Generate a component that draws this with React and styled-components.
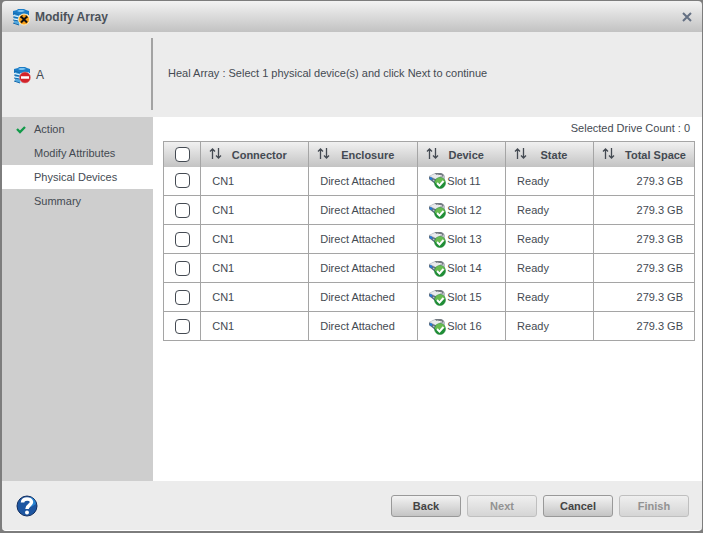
import React, { useState } from "react"
import styled, { createGlobalStyle } from "styled-components"

const GlobalStyle = createGlobalStyle`
	* {
		box-sizing: border-box;
	}

	body {
		margin: 0;
		background: #7d7d7d;
		color: #444a52;
		font-family: "Liberation Sans", Arial, sans-serif;
		font-size: 11px;
		line-height: 14px;
	}
`

const DialogElement = styled.div`
	min-height: 100vh;
	padding: 1px 1px 2px 2px;
	display: flex;
	flex-direction: column;
`

const TitleBarElement = styled.header`
	height: 31px;
	padding: 0 7px 0 10px;
	display: flex;
	align-items: center;
	border-radius: 4px 4px 0 0;
	background: linear-gradient(#f3f3f3, #c2c2c2);
`

const TitleElement = styled.h1`
	flex: 1;
	margin: 0 0 0 5px;
	color: #4b5159;
	font-size: 12px;
	font-weight: bold;
`

const CloseElement = styled.button`
	width: 16px;
	height: 16px;
	padding: 0;
	border: 0;
	background: none;
	display: flex;
	align-items: center;
	justify-content: center;
`

const InfoElement = styled.section`
	height: 85px;
	display: flex;
	background: #ececec;
`

const ArrayNameElement = styled.div`
	width: 151px;
	margin: 6px 0 7px;
	padding: 1px 0 0 11px;
	display: flex;
	align-items: center;
	gap: 5px;
	border-right: 2px solid #a3a3a3;
	font-size: 12px;
`

const MessageElement = styled.p`
	margin: 34px 0 0 15px;
`

const BodyElement = styled.div`
	flex: 1;
	display: flex;
	background: #fff;
`

const StepsElement = styled.nav`
	width: 151px;
	flex: none;
	background: #cecece;
`

const StepElement = styled.a`
	height: 24px;
	display: grid;
	grid-template-columns: 32px 1fr;
	align-items: center;
	color: inherit;
	text-decoration: none;
	background: ${(props) => (props.$active ? "#fff" : "none")};

	> svg {
		margin-left: 14px;
	}

	> span {
		grid-column: 2;
	}
`

const ContentElement = styled.main`
	flex: 1;
	padding: 4px 7px 0 10px;
`

const CountElement = styled.p`
	margin: 0 5px 6px 0;
	text-align: right;
`

const TableElement = styled.table`
	width: 100%;
	table-layout: fixed;
	border-collapse: collapse;
	border: 1px solid #a5a5a5;
`

const HeadRowElement = styled.tr`
	height: 25px;
	background: linear-gradient(#f1f1f1, #c3c3c3);
`

const RowElement = styled.tr`
	height: 29px;
	border-bottom: 1px solid #a5a5a5;
`

const HeadCellElement = styled.th`
	width: ${(props) => props.$width};
	padding: 0 8px;
	border-right: 1px solid #a5a5a5;
	font-size: 11px;
	font-weight: bold;
`

const SortElement = styled.button`
	width: 100%;
	padding: 0;
	border: 0;
	background: none;
	color: inherit;
	font: inherit;
	display: flex;
	align-items: center;

	> span {
		flex: 1;
		padding: ${(props) => (props.$align ? "2px 0 0" : "2px 4px 0 0")};
		text-align: ${(props) => props.$align || "center"};
	}
`

const CellElement = styled.td`
	padding: 0 11px;
	border-right: 1px solid #a5a5a5;
	text-align: ${(props) => props.$align || "left"};
`

const DeviceElement = styled.div`
	display: flex;
	align-items: center;
	gap: 1px;
`

const CheckboxElement = styled.input.attrs({ type: "checkbox" })`
	appearance: none;
	display: block;
	width: 15px;
	height: 15px;
	margin: 0 auto;
	border: 1px solid #444a52;
	border-radius: 4px;
	background: #fff;

	&:checked {
		box-shadow: inset 0 0 0 3px #fff;
		background: #444a52;
	}
`

const FooterElement = styled.footer`
	height: 50px;
	padding: 0 13px 0 14px;
	display: flex;
	align-items: center;
	gap: 6px;
	border-radius: 0 0 4px 4px;
	border-bottom: 1px solid #fff;
	background: #ececec;
`

const HelpElement = styled.button`
	height: 22px;
	margin-right: auto;
	padding: 0;
	border: 0;
	background: none;
`

const ButtonElement = styled.button`
	width: 70px;
	height: 22px;
	padding: 0;
	border: 1px solid #999;
	border-radius: 3px;
	background: linear-gradient(#f3f3f3, #c4c4c4);
	color: #444;
	font: bold 11px "Liberation Sans", Arial, sans-serif;

	&:disabled {
		border-color: #bfbfbf;
		background: linear-gradient(#efefef, #d5d5d5);
		color: #929292;
	}
`

function ArrayIcon({ children }) {
	return (
		<svg width="18" height="18" viewBox="0 0 18 18" aria-hidden="true">
			<path d="M1 3l4-1 1-1h6l2 1 3 1v4H1z" fill="#1b7cc6" />
			<path d="M5 3l2-1h4l2 1-3 1H7z" fill="#7cc3f0" />
			<path d="M2 6l5 1v10l-5-2z" fill="#55a9de" />
			<path d="M7 7l9-1v9l-9 2z" fill="#a9daf5" />
			<path d="M1 5l6 2M1 9l6 1M1 12l6 1M1 15l6 2" fill="none" stroke="#1469ac" />
			<path d="M2 7.500l5 1.500M2 11l5 1" stroke="#e4f5ff" />
			<path d="M7 9.500l9-1M7 12.500l9-1" stroke="#3c9ad6" />
			{children}
		</svg>
	)
}

function ModifyIcon() {
	return (
		<ArrayIcon>
			<circle cx="12" cy="11.500" r="5.500" fill="#f9a11b" stroke="#fdebbd" />
			<path d="M9 8.500l6 6M15 8.500l-6 6" stroke="#111" strokeWidth="2" />
			<path d="M8 9.500l2.500-2M14 7.500l1.500 2" stroke="#111" />
		</ArrayIcon>
	)
}

function FailedIcon() {
	return (
		<ArrayIcon>
			<circle cx="12" cy="11.500" r="5.500" fill="#d2232a" stroke="#e58b8b" strokeWidth="0.500" />
			<path d="M8 11.500h8" stroke="#fff" strokeWidth="2.500" />
		</ArrayIcon>
	)
}

function DriveIcon() {
	return (
		<svg width="17" height="17" viewBox="0 0 17 17" aria-hidden="true">
			<path d="M0 4l6-3h7l3 3v4l-8 5-8-6z" fill="#b9bec3" />
			<path d="M6 1h6l3 2-2 2-6-2z" fill="#737a81" />
			<path d="M1 4l5-2 6 3-5 2z" fill="#e9ebed" />
			<path d="M8 3l5 1" stroke="#f7f7f7" />
			<path d="M0 4.500l7 3v5L0 7z" fill="#5c6f84" />
			<path d="M1 6l2 1" stroke="#1f7be0" strokeWidth="2" />
			<path d="M4 8l3 2" stroke="#c8d4e0" />
			<circle cx="11" cy="11" r="5.500" fill="#1f8f36" stroke="#1b7a30" strokeWidth="0.500" />
			<path d="M6 11a5 5 0 0 1 10-1l-5 1z" fill="#68bb50" />
			<path d="M8 11l2.500 2.500L14.500 9" fill="none" stroke="#fff" strokeWidth="2" />
		</svg>
	)
}

function SortIcon() {
	return (
		<svg width="13" height="12" viewBox="0 0 13 12" aria-hidden="true">
			<path
				d="M3.500 11V1M1 3.500L3.500 1 6 3.500M9.500 0v10M7 7.500l2.500 2.500L12 7.500"
				fill="none"
				stroke="#444a52"
				strokeWidth="1.300"
			/>
		</svg>
	)
}

function CheckIcon() {
	return (
		<svg width="11" height="9" viewBox="0 0 11 9" aria-hidden="true">
			<path d="M1 4l3 3 5-5" fill="none" stroke="#119a49" strokeWidth="2.300" />
		</svg>
	)
}

function CloseIcon() {
	return (
		<svg width="10" height="10" viewBox="0 0 10 10" aria-hidden="true">
			<path d="M1 1l8 8M9 1L1 9" stroke="#647083" strokeWidth="2" />
		</svg>
	)
}

function HelpIcon() {
	return (
		<svg width="22" height="22" viewBox="0 0 22 22" aria-hidden="true">
			<circle cx="11" cy="11" r="10" fill="#1d56a2" stroke="#142f60" />
			<path d="M14 2a9 9 0 0 1 6 7l-5 3z" fill="#2783d1" />
			<path
				d="M6.500 7.500c0-5 9-4.500 9-0.500 0 3.500-4.500 3-4.500 7"
				fill="none"
				stroke="#fff"
				strokeWidth="3.500"
			/>
			<circle cx="11" cy="17.500" r="2" fill="#fff" />
		</svg>
	)
}

const steps = [
	{ name: "Action", done: true },
	{ name: "Modify Attributes" },
	{ name: "Physical Devices", active: true },
	{ name: "Summary" },
]

const columns = [
	{ name: "Connector", width: "20.300%" },
	{ name: "Enclosure", width: "20.500%" },
	{ name: "Device", width: "16.500%" },
	{ name: "State", width: "16.500%" },
	{ name: "Total Space", width: "19%", align: "right" },
]

const slots = [11, 12, 13, 14, 15, 16]

function DeviceTable({ selected, onChange }) {
	const toggle = (slot) =>
		onChange(
			selected.includes(slot) ? selected.filter((s) => s !== slot) : [...selected, slot]
		)

	return (
		<TableElement>
			<thead>
				<HeadRowElement>
					<HeadCellElement $width="7%">
						<CheckboxElement
							aria-label="Select all"
							checked={selected.length === slots.length}
							onChange={(e) => onChange(e.target.checked ? slots : [])}
						/>
					</HeadCellElement>
					{columns.map(({ name, width, align }) => (
						<HeadCellElement key={name} $width={width}>
							<SortElement $align={align}>
								<SortIcon />
								<span>{name}</span>
							</SortElement>
						</HeadCellElement>
					))}
				</HeadRowElement>
			</thead>
			<tbody>
				{slots.map((slot) => (
					<RowElement key={slot}>
						<CellElement>
							<CheckboxElement
								aria-label={`Select slot ${slot}`}
								checked={selected.includes(slot)}
								onChange={() => toggle(slot)}
							/>
						</CellElement>
						<CellElement>CN1</CellElement>
						<CellElement>Direct Attached</CellElement>
						<CellElement>
							<DeviceElement>
								<DriveIcon />
								Slot {slot}
							</DeviceElement>
						</CellElement>
						<CellElement>Ready</CellElement>
						<CellElement $align="right">279.3 GB</CellElement>
					</RowElement>
				))}
			</tbody>
		</TableElement>
	)
}

function App() {
	const [selected, setSelected] = useState([])

	return (
		<DialogElement role="dialog" aria-labelledby="title">
			<GlobalStyle />
			<TitleBarElement>
				<ModifyIcon />
				<TitleElement id="title">Modify Array</TitleElement>
				<CloseElement aria-label="Close">
					<CloseIcon />
				</CloseElement>
			</TitleBarElement>
			<InfoElement>
				<ArrayNameElement>
					<FailedIcon />A
				</ArrayNameElement>
				<MessageElement>
					Heal Array : Select 1 physical device(s) and click Next to continue
				</MessageElement>
			</InfoElement>
			<BodyElement>
				<StepsElement>
					{steps.map(({ name, done, active }) => (
						<StepElement key={name} href="#" $active={active}>
							{done && <CheckIcon />}
							<span>{name}</span>
						</StepElement>
					))}
				</StepsElement>
				<ContentElement>
					<CountElement>Selected Drive Count : {selected.length}</CountElement>
					<DeviceTable selected={selected} onChange={setSelected} />
				</ContentElement>
			</BodyElement>
			<FooterElement>
				<HelpElement aria-label="Help">
					<HelpIcon />
				</HelpElement>
				<ButtonElement>Back</ButtonElement>
				<ButtonElement disabled>Next</ButtonElement>
				<ButtonElement>Cancel</ButtonElement>
				<ButtonElement disabled>Finish</ButtonElement>
			</FooterElement>
		</DialogElement>
	)
}

export default App
